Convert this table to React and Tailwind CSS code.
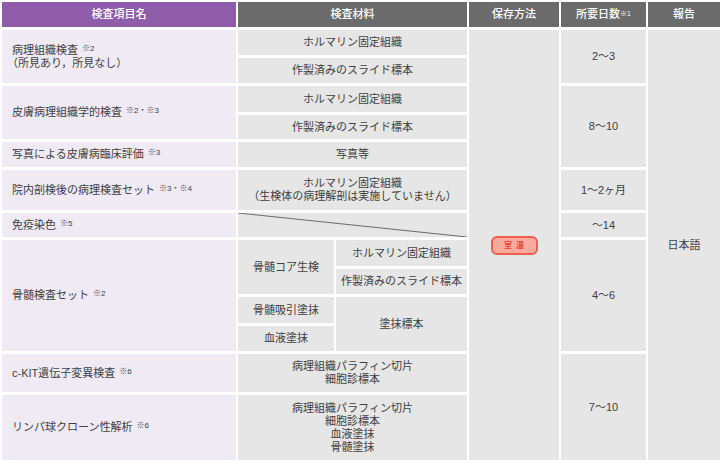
import React from 'react';

const Sup = ({ children }) => (
  <span className="text-[8px] leading-[8px] align-top relative top-[1px] ml-[4px]">{children}</span>
);

const Gray = ({ className = '', children }) => (
  <div className={`bg-[#e6e6e6] flex flex-col items-center justify-center text-center ${className}`}>
    {children}
  </div>
);

const Name = ({ className = '', children }) => (
  <div className={`bg-[#efeaf4] flex flex-col justify-center pl-[10px] ${className}`}>{children}</div>
);

const App = () => {
  return (
    <div
      className="w-[720px] h-[464px] bg-white pl-[2px] pt-[2px] text-[11px] leading-[13px] text-[#404040]"
      style={{ fontFamily: '"Liberation Sans", "Noto Sans CJK JP", sans-serif' }}
    >
      <div className="grid grid-cols-[234px_96px_131px_90px_85px_72px] grid-rows-[25px_25px_25px_26px_24px_25px_40px_24px_26px_25px_26px_25px_38px_65px] gap-x-[2px] gap-y-[3px]">
        {/* header */}
        <div className="bg-[#8e5ca9] text-white flex items-center justify-center font-medium">検査項目名</div>
        <div className="col-span-2 bg-[#6b6b6b] text-white flex items-center justify-center font-medium">検査材料</div>
        <div className="bg-[#6b6b6b] text-white flex items-center justify-center font-medium">保存方法</div>
        <div className="bg-[#6b6b6b] text-white flex items-center justify-center font-medium">
          <span>所要日数<span className="text-[7px] align-top relative -top-[1px]">※1</span></span>
        </div>
        <div className="bg-[#6b6b6b] text-white flex items-center justify-center font-medium">報告</div>

        {/* column 1 */}
        <Name className="col-start-1 row-start-2 row-span-2">
          <span>病理組織検査<Sup>※2</Sup></span>
          <span className="-ml-[5px]">（所見あり，所見なし）</span>
        </Name>
        <Name className="col-start-1 row-start-4 row-span-2">
          <span>皮膚病理組織学的検査<Sup>※2・※3</Sup></span>
        </Name>
        <Name className="col-start-1 row-start-6">
          <span>写真による皮膚病臨床評価<Sup>※3</Sup></span>
        </Name>
        <Name className="col-start-1 row-start-7">
          <span>院内剖検後の病理検査セット<Sup>※3・※4</Sup></span>
        </Name>
        <Name className="col-start-1 row-start-8">
          <span>免疫染色<Sup>※5</Sup></span>
        </Name>
        <Name className="col-start-1 row-start-9 row-span-4">
          <span>骨髄検査セット<Sup>※2</Sup></span>
        </Name>
        <Name className="col-start-1 row-start-13">
          <span>c-KIT遺伝子変異検査<Sup>※6</Sup></span>
        </Name>
        <Name className="col-start-1 row-start-14">
          <span>リンパ球クローン性解析<Sup>※6</Sup></span>
        </Name>

        {/* column 2: materials */}
        <Gray className="col-start-2 col-span-2 row-start-2">ホルマリン固定組織</Gray>
        <Gray className="col-start-2 col-span-2 row-start-3">作製済みのスライド標本</Gray>
        <Gray className="col-start-2 col-span-2 row-start-4">ホルマリン固定組織</Gray>
        <Gray className="col-start-2 col-span-2 row-start-5">作製済みのスライド標本</Gray>
        <Gray className="col-start-2 col-span-2 row-start-6">写真等</Gray>
        <Gray className="col-start-2 col-span-2 row-start-7">
          <span>ホルマリン固定組織</span>
          <span>（生検体の病理解剖は実施していません）</span>
        </Gray>
        <div className="col-start-2 col-span-2 row-start-8 bg-[#e6e6e6] relative">
          <svg className="absolute inset-0 w-full h-full" viewBox="0 0 100 100" preserveAspectRatio="none">
            <line x1="0" y1="0" x2="100" y2="100" stroke="#6a6a6a" strokeWidth="1" vectorEffect="non-scaling-stroke" />
          </svg>
        </div>
        <Gray className="col-start-2 row-start-9 row-span-2">骨髄コア生検</Gray>
        <Gray className="col-start-3 row-start-9">ホルマリン固定組織</Gray>
        <Gray className="col-start-3 row-start-10">作製済みのスライド標本</Gray>
        <Gray className="col-start-2 row-start-11">骨髄吸引塗抹</Gray>
        <Gray className="col-start-2 row-start-12">血液塗抹</Gray>
        <Gray className="col-start-3 row-start-11 row-span-2">塗抹標本</Gray>
        <Gray className="col-start-2 col-span-2 row-start-13">
          <span>病理組織パラフィン切片</span>
          <span>細胞診標本</span>
        </Gray>
        <Gray className="col-start-2 col-span-2 row-start-14">
          <span>病理組織パラフィン切片</span>
          <span>細胞診標本</span>
          <span>血液塗抹</span>
          <span>骨髄塗抹</span>
        </Gray>

        {/* column 3: storage */}
        <Gray className="col-start-4 row-start-2 row-span-13">
          <span className="w-[47px] h-[19px] rounded-[6px] border-2 border-[#ee5e4e] bg-[#f9aa9e] text-[#e2402f] text-[8px] font-bold flex items-center justify-center tracking-[4px] pl-[4px]">
            室温
          </span>
        </Gray>

        {/* column 4: days */}
        <Gray className="col-start-5 row-start-2 row-span-2">2～3</Gray>
        <Gray className="col-start-5 row-start-4 row-span-3">8～10</Gray>
        <Gray className="col-start-5 row-start-7">1～2ヶ月</Gray>
        <Gray className="col-start-5 row-start-8">～14</Gray>
        <Gray className="col-start-5 row-start-9 row-span-4">4～6</Gray>
        <Gray className="col-start-5 row-start-13 row-span-2">7～10</Gray>

        {/* column 5: report */}
        <Gray className="col-start-6 row-start-2 row-span-13">日本語</Gray>
      </div>
    </div>
  );
};

export default App;
